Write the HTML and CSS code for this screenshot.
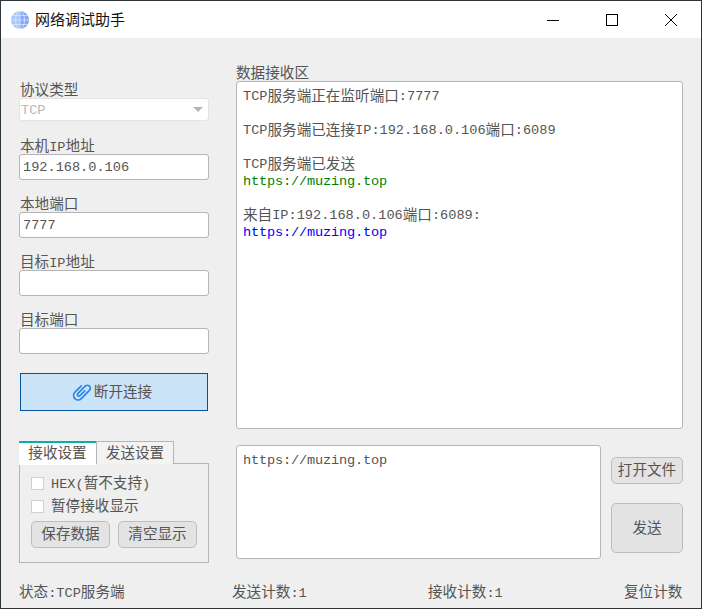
FILE: index.html
```html
<!DOCTYPE html>
<html lang="zh">
<head>
<meta charset="utf-8">
<title>网络调试助手</title>
<link rel="stylesheet" href="styles.css">
</head>
<body>
<div class="window">
  <header class="titlebar">
    <svg class="app-icon" width="20" height="20" viewBox="0 0 20 20">
      <circle cx="10" cy="10" r="9" fill="#a9c6fb"/>
      <path d="M10 1a9 9 0 0 1 0 18z" fill="#86a8f7"/>
      <g fill="none" stroke="#e4ecfd" stroke-width="1" stroke-opacity=".7">
        <ellipse cx="10" cy="10" rx="4.5" ry="9"/>
        <path d="M10 1v18M1 10h18M2.5 5.5h15M2.5 14.5h15"/>
      </g>
    </svg>
    <span class="app-title">网络调试助手</span>
    <div class="winctl">
      <svg width="14" height="14" viewBox="0 0 14 14" class="ctl-min"><path d="M1 6.5h12" stroke="#000" fill="none"/></svg>
      <svg width="14" height="14" viewBox="0 0 14 14" class="ctl-max"><rect x="1.5" y="1.5" width="11" height="11" stroke="#000" fill="none"/></svg>
      <svg width="14" height="14" viewBox="0 0 14 14" class="ctl-close"><path d="M1 1l12 12M13 1L1 13" stroke="#000" fill="none"/></svg>
    </div>
  </header>
  <main class="content">
    <div class="columns">
      <section class="left">
        <label class="field-label first">协议类型</label>
        <div class="select"><span class="lat">TCP</span><i class="caret"></i></div>
        <label class="field-label second">本机<span class="lat">IP</span>地址</label>
        <div class="input"><span class="lat">192.168.0.106</span></div>
        <label class="field-label">本地端口</label>
        <div class="input"><span class="lat">7777</span></div>
        <label class="field-label">目标<span class="lat">IP</span>地址</label>
        <div class="input"></div>
        <label class="field-label">目标端口</label>
        <div class="input"></div>
        <button class="connect">
          <svg width="20" height="20" viewBox="0 0 20 20"><path d="M5.5 6V15a4.5 4.5 0 0 0 9 0V3.5a3 3 0 0 0-6 0V14a1.5 1.5 0 0 0 3 0V7" transform="rotate(45 10 9.5)" fill="none" stroke="#2a86e8" stroke-width="1.7" stroke-linecap="round"/></svg>
          <span class="btn-text">断开连接</span>
        </button>
        <div class="tabs">
          <div class="tabbar">
            <div class="tab active">接收设置</div>
            <div class="tab">发送设置</div>
          </div>
          <div class="pane">
            <div class="check"><i class="box"></i><span class="check-text"><span class="lat">HEX(</span>暂不支持<span class="lat">)</span></span></div>
            <div class="check"><i class="box"></i><span class="check-text">暂停接收显示</span></div>
            <div class="pane-btns">
              <button class="btn small">保存数据</button>
              <button class="btn small">清空显示</button>
            </div>
          </div>
        </div>
      </section>
      <section class="right">
        <div class="recv-label">数据接收区</div>
        <div class="recv">
          <div class="line"><span class="lat">TCP</span>服务端正在监听端口<span class="lat">:7777</span></div>
          <div class="line"></div>
          <div class="line"><span class="lat">TCP</span>服务端已连接<span class="lat">IP:192.168.0.106</span>端口<span class="lat">:6089</span></div>
          <div class="line"></div>
          <div class="line"><span class="lat">TCP</span>服务端已发送</div>
          <div class="line green"><span class="lat url">https://muzing.top</span></div>
          <div class="line"></div>
          <div class="line">来自<span class="lat">IP:192.168.0.106</span>端口<span class="lat">:6089:</span></div>
          <div class="line blue"><span class="lat url">https://muzing.top</span></div>
        </div>
        <div class="send-row">
          <div class="send-box"><span class="lat url">https://muzing.top</span></div>
          <div class="send-btns">
            <button class="btn open">打开文件</button>
            <button class="btn send">发送</button>
          </div>
        </div>
      </section>
    </div>
    <footer class="status">
      <span class="st-a">状态<span class="lat">:TCP</span>服务端</span>
      <span class="st-b">发送计数<span class="lat">:1</span></span>
      <span class="st-c">接收计数<span class="lat">:1</span></span>
      <span class="st-d">复位计数</span>
    </footer>
  </main>
</div>
</body>
</html>
```
FILE: styles.css
```css
* { box-sizing: border-box; }
html, body { margin: 0; padding: 0; }
body { width: 702px; height: 609px; overflow: hidden; background: #333; }
.window {
  width: 702px; height: 609px;
  border: 1px solid #2c3538;
  background: #efefef;
  font-family: "Liberation Mono", "Noto Sans CJK SC", monospace;
  font-size: 14.6px; line-height: 17px; color: #555;
  display: flex; flex-direction: column;
}
.lat { font-size: 13.6px; }
.url { letter-spacing: -0.16px; }
.titlebar { height: 37px; background: #fff; display: flex; align-items: center; padding-left: 9px; flex: none; }
.app-title { margin-left: 5px; color: #111; font-size: 15px; line-height: 21px; height: 17px; }
.winctl { margin-left: auto; display: flex; align-items: center; }
.ctl-min { margin-right: 45px; margin-top: 2px; }
.ctl-max { margin-right: 45px; }
.ctl-close { margin-right: 23px; }
.content { flex: 1; display: flex; flex-direction: column; padding: 0 18px; }
.columns { display: flex; gap: 27px; height: 525px; flex: none; }
.left { width: 190px; flex: none; display: flex; flex-direction: column; }
.left > * { flex: none; }
.right { flex: 1; display: flex; flex-direction: column; }
.right > * { flex: none; }
.field-label { display: block; margin-top: 15px; height: 17px; line-height: 21px; padding-left: 1px; }
.field-label.first { margin-top: 43px; }
.field-label.second { margin-top: 16px; }
.select {
  height: 23px; background: #fff; border: 1px solid #e4e4e4; border-radius: 3px;
  color: #b8b8b8; display: flex; align-items: center; padding: 1px 0 0 1px; position: relative;
}
.caret { position: absolute; right: 5px; top: 8px; width: 0; height: 0; border: 5px solid transparent; border-top: 5px solid #b5b5b5; border-bottom: 0; }
.input {
  height: 26px; background: #fff; border: 1px solid #b5b5b5; border-radius: 3px;
  display: flex; align-items: center; padding-left: 3px; color: #555;
}
.connect {
  margin-top: 19px; height: 38px; width: 188px; margin-left: 1px;
  background: #cce4f7; border: 1px solid #005499; border-radius: 0;
  display: flex; align-items: center; justify-content: center; gap: 2px;
  font: inherit; color: #555; padding: 0 4px 0 0;
}
.btn-text { padding-top: 2px; }
.tabs { margin-top: 30px; }
.tabbar { display: flex; height: 23px; }
.tab {
  width: 78px; height: 23px; border: 1px solid #b5b5b5; border-bottom: 0;
  text-align: center; line-height: 24px; background: #f3f3f3;
}
.tab.active { width: 77px; background: #fff; border: 0; border-top: 2px solid #00b4a0; line-height: 22px; position: relative; z-index: 1; height: 24px; }
.pane { height: 100px; border: 1px solid #b5b5b5; margin-top: -1px; padding: 11px 11px 0; width: 190px; }
.check { display: flex; align-items: center; height: 17px; margin-bottom: 6px; gap: 7px; }
.check-text { line-height: 19px; height: 17px; }
.box { width: 13px; height: 13px; background: #fff; border: 1px solid #d0d0d0; flex: none; }
.pane-btns { display: flex; gap: 8px; margin-top: 1px; }
.btn { background: #e3e3e3; border: 1px solid #bdbdbd; border-radius: 5px; font: inherit; color: #555; padding: 2px 0 0; }
.small { height: 27px; width: 79px; }
.recv-label { margin-top: 26px; height: 17px; line-height: 21px; }
.recv {
  height: 348px; background: #fff; border: 1px solid #b5b5b5; border-radius: 3px;
  padding: 6px;
}
.line { height: 17px; white-space: nowrap; }
.line .lat { vertical-align: 1px; }
.green { color: #008000; }
.blue { color: #0000ff; }
.send-row { display: flex; margin-top: 16px; gap: 10px; }
.send-box {
  width: 365px; height: 114px; background: #fff; border: 1px solid #b5b5b5; border-radius: 3px;
  padding: 6px;
}
.send-btns { display: flex; flex-direction: column; padding-top: 12px; gap: 19px; }
.open { width: 72px; height: 27px; flex: none; }
.send { width: 72px; height: 50px; flex: none; }
.status { display: flex; height: 17px; margin-top: 22px; white-space: nowrap; flex: none; }
.st-a { width: 213px; }
.st-b { width: 196px; }
.st-c { width: 196px; }
```
